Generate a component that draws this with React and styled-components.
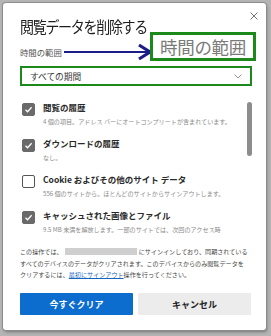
import React from "react";
import styled, { createGlobalStyle } from "styled-components";

// ページ全体の基本スタイル
const GlobalStyle = createGlobalStyle`
  html, body {
    margin: 0;
    padding: 0;
    background: #b4b4b4;
  }
  body {
    font-family: "Noto Sans CJK JP", "Noto Sans", sans-serif;
  }
`;

const Page = styled.div`
  width: 271px;
  height: 336px;
  padding: 3px 5px 6px 3px;
  box-sizing: border-box;
`;

const Dialog = styled.div`
  position: relative;
  width: 263px;
  height: 327px;
  box-sizing: border-box;
  padding: 13px 14px 15px 17px;
  background: #fff;
  border-radius: 3px;
  box-shadow: 0 0 0 1px #8c8c8c, 1px 2px 3px rgba(0, 0, 0, 0.35);
  display: flex;
  flex-direction: column;
`;

const Title = styled.h1`
  margin: 0;
  font-size: 14px;
  line-height: 20px;
  font-weight: 400;
  letter-spacing: -1.3px;
  color: #1e1e1e;
  transform: scaleY(1.1);
  transform-origin: left center;
`;

const CloseButton = styled.button`
  position: absolute;
  top: 8px;
  right: 7px;
  width: 10px;
  height: 10px;
  padding: 0;
  border: 0;
  background: none;
  display: flex;
`;

const RangeLabel = styled.div`
  margin-top: 10px;
  font-size: 8.4px;
  line-height: 12px;
  color: #555;
`;

const Select = styled.div`
  margin-top: 8px;
  height: 20px;
  box-sizing: border-box;
  border: 2px solid #1b8a1b;
  display: flex;
  align-items: center;
  justify-content: space-between;
  padding: 0 8px 0 8px;
  font-size: 8.7px;
  color: #333;
`;

const List = styled.div`
  position: relative;
  margin-top: 15px;
  height: 140px;
  overflow: hidden;
`;

const Item = styled.div`
  display: flex;
  align-items: flex-start;
  gap: 8px;
  padding: 0 0 10px 2px;
`;

const Box = styled.span`
  flex: none;
  width: 13px;
  height: 13px;
  margin-top: 1.5px;
  box-sizing: border-box;
  border-radius: 2px;
  display: flex;
  align-items: center;
  justify-content: center;
  background: ${(p) => (p.$checked ? "#6a6a6a" : "#fff")};
  border: 1px solid ${(p) => (p.$checked ? "#6a6a6a" : "#555")};
`;

const ItemText = styled.div`
  min-width: 0;
  flex: 1;
  padding-right: 8px;
`;

const ItemTitle = styled.div`
  font-size: 8.5px;
  line-height: 13px;
  font-weight: 600;
  color: #2a2a2a;
  white-space: nowrap;
`;

const ItemSub = styled.div`
  margin-top: 2px;
  font-size: 6.1px;
  line-height: 11px;
  color: #8a8a8a;
  white-space: nowrap;
`;

const Thumb = styled.div`
  position: absolute;
  right: 0;
  top: 1px;
  width: 5px;
  height: 54px;
  border-radius: 3px;
  background: #8d8d8d;
`;

const Footer = styled.div`
  margin-top: 5px;
  font-size: 6.1px;
  line-height: 11.5px;
  color: #444;
`;

const Line = styled.div`
  white-space: nowrap;
`;

const Hidden = styled.span`
  display: inline-block;
  width: 72px;
  height: 7px;
  margin: 0 2px;
  vertical-align: -1px;
  background: #cfcfcf;
  filter: blur(0.6px);
`;

const Link = styled.a`
  color: #1565c0;
  text-decoration: underline;
`;

const Buttons = styled.div`
  margin-top: 12.5px;
  display: flex;
  gap: 5px;
  width: 231px;
`;

const Button = styled.button`
  flex: 1;
  height: 22px;
  border: 0;
  border-radius: 1px;
  font-family: inherit;
  font-size: 9px;
  font-weight: 700;
  background: ${(p) => (p.$primary ? "#0c6dce" : "#ececec")};
  color: ${(p) => (p.$primary ? "#fff" : "#222")};
`;

// 注釈（緑の枠と矢印）
const Callout = styled.div`
  position: absolute;
  left: 147px;
  top: 29px;
  width: 106px;
  height: 29px;
  box-sizing: border-box;
  border: 3px solid #1b8a1b;
  background: #fff;
  display: flex;
  align-items: center;
  justify-content: center;
  font-size: 17.5px;
  color: #7a7a7a;
  letter-spacing: -0.3px;
`;

const Arrow = styled.svg`
  position: absolute;
  left: 58px;
  top: 40px;
`;

const Check = () => (
  <svg width="9" height="9" viewBox="0 0 9 9">
    <path d="M1.5 4.7 L3.6 6.7 L7.6 2.2" fill="none" stroke="#fff" strokeWidth="1.3" />
  </svg>
);

const items = [
  { title: "閲覧の履歴", sub: "4 個の項目。アドレス バーにオートコンプリートが含まれています。", checked: true },
  { title: "ダウンロードの履歴", sub: "なし。", checked: true },
  { title: "Cookie およびその他のサイト データ", sub: "556 個のサイトから。ほとんどのサイトからサインアウトします。", checked: false },
  { title: "キャッシュされた画像とファイル", sub: "9.5 MB 未満を解放します。一部のサイトでは、次回のアクセス時", checked: true },
];

const App = () => {
  return (
    <>
      <GlobalStyle />
      <Page>
        <Dialog>
          <Title>閲覧データを削除する</Title>
          <CloseButton aria-label="閉じる">
            <svg width="10" height="10" viewBox="0 0 10 10">
              <path d="M1.5 1.5 L8.5 8.5 M8.5 1.5 L1.5 8.5" stroke="#666" strokeWidth="0.9" />
            </svg>
          </CloseButton>

          <RangeLabel>時間の範囲</RangeLabel>
          <Select>
            <span>すべての期間</span>
            <svg width="8" height="5" viewBox="0 0 8 5">
              <path d="M0.5 0.5 L4 4 L7.5 0.5" fill="none" stroke="#777" strokeWidth="0.8" />
            </svg>
          </Select>

          <List>
            {items.map((it) => (
              <Item key={it.title}>
                <Box $checked={it.checked}>{it.checked && <Check />}</Box>
                <ItemText>
                  <ItemTitle>{it.title}</ItemTitle>
                  <ItemSub>{it.sub}</ItemSub>
                </ItemText>
              </Item>
            ))}
            <Thumb />
          </List>

          <Footer>
            <Line>
              この操作では、<Hidden />にサインインしており、同期されている
            </Line>
            <Line>すべてのデバイスのデータがクリアされます。このデバイスからのみ閲覧データを</Line>
            <Line>
              クリアするには、<Link>最初にサインアウト</Link>操作を行ってください。
            </Line>
          </Footer>

          <Buttons>
            <Button $primary>今すぐクリア</Button>
            <Button>キャンセル</Button>
          </Buttons>

          <Arrow width="92" height="22" viewBox="0 0 92 22">
            <path d="M3 9 L88 9" stroke="#1c1c88" strokeWidth="1.8" />
            <path d="M78 2 L89 9 L78 16" fill="none" stroke="#1c1c88" strokeWidth="3.2" />
          </Arrow>
          <Callout>時間の範囲</Callout>
        </Dialog>
      </Page>
    </>
  );
};

export default App;
